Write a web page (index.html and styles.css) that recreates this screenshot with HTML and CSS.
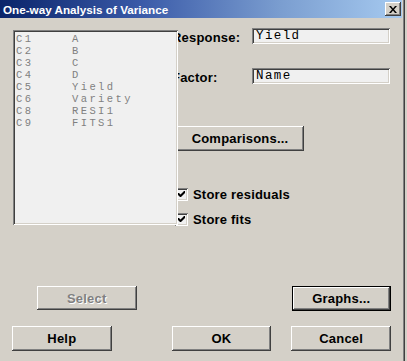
FILE: index.html
```html
<!DOCTYPE html>
<html>
<head>
<meta charset="utf-8">
<link rel="stylesheet" href="styles.css">
</head>
<body>
<div class="window">
  <div class="titlebar">
    <span class="title">One-way Analysis of Variance</span>
    <span class="close"><svg width="8" height="7" viewBox="0 0 8 7"><path d="M0 0h2l2 2.5L6 0h2L5 3.5 8 7H6L4 4.5 2 7H0l3-3.5z" fill="#000"/></svg></span>
  </div>
  <div class="body">
    <div class="top">
      <div class="listbox">
        <div class="item"><span class="c">C1</span><span>A</span></div>
        <div class="item"><span class="c">C2</span><span>B</span></div>
        <div class="item"><span class="c">C3</span><span>C</span></div>
        <div class="item"><span class="c">C4</span><span>D</span></div>
        <div class="item"><span class="c">C5</span><span>Yield</span></div>
        <div class="item"><span class="c">C6</span><span>Variety</span></div>
        <div class="item"><span class="c">C8</span><span>RESI1</span></div>
        <div class="item"><span class="c">C9</span><span>FITS1</span></div>
      </div>
      <div class="right">
        <div class="field">
          <span class="label">Response:</span>
          <div class="textbox">Yield</div>
        </div>
        <div class="field field2">
          <span class="label">Factor:</span>
          <div class="textbox">Name</div>
        </div>
        <button class="btn compare">Comparisons...</button>
        <div class="check first">
          <span class="box"><svg width="13" height="13" viewBox="0 0 13 13"><path d="M3 5v2l2 2h1l4-4V3h-1L5.5 6.5 4 5z" fill="#000"/></svg></span>
          <span class="label">Store residuals</span>
        </div>
        <div class="check">
          <span class="box"><svg width="13" height="13" viewBox="0 0 13 13"><path d="M3 5v2l2 2h1l4-4V3h-1L5.5 6.5 4 5z" fill="#000"/></svg></span>
          <span class="label">Store fits</span>
        </div>
      </div>
    </div>
    <div class="row row1">
      <button class="btn select" disabled>Select</button>
      <button class="btn default graphs">Graphs...</button>
    </div>
    <div class="row row2">
      <button class="btn help">Help</button>
      <button class="btn ok">OK</button>
      <button class="btn cancel">Cancel</button>
    </div>
  </div>
</div>
</body>
</html>
```
FILE: styles.css
```css
html, body {
  margin: 0;
  padding: 0;
  background: #d4d0c8;
}
.window {
  width: 405px;
  height: 361px;
  background: #d4d0c8;
  box-sizing: border-box;
  border-right: 1px solid #404040;
  box-shadow: inset -1px 0 #808080;
  overflow: hidden;
  font-family: "Liberation Sans", Arial, sans-serif;
}
.titlebar {
  height: 18px;
  margin-right: 2px;
  background: linear-gradient(to right, #0a246a 0%, #3a5aa8 35%, #7b9ed0 70%, #a6caf0 100%);
  display: flex;
  align-items: center;
  justify-content: space-between;
  padding-left: 3px;
}
.title {
  color: #fff;
  font-weight: bold;
  font-size: 11.7px;
  letter-spacing: 0;
}
.close {
  width: 16px;
  height: 14px;
  margin-right: 1px;
  box-sizing: border-box;
  background: #d4d0c8;
  box-shadow: inset -1px -1px #404040, inset 1px 1px #fff, inset -2px -2px #808080;
  display: flex;
  align-items: center;
  justify-content: center;
}
.body {
  padding: 10px 13px 0 13px;
}
.top {
  display: flex;
  height: 200px;
}
.listbox {
  position: relative;
  z-index: 1;
  flex: none;
  width: 165px;
  height: 195px;
  margin-top: 2px;
  box-sizing: border-box;
  background: #f0f0f0;
  box-shadow: inset 1px 1px #808080, inset -1px -1px #fff, inset 2px 2px #404040, inset -2px -2px #d4d0c8;
  padding: 3px 0 0 3px;
  font-family: "Liberation Mono", "Courier New", monospace;
  font-size: 10.5px;
  letter-spacing: 2.4px;
  color: #808080;
}
.item {
  display: flex;
  height: 12px;
  line-height: 12px;
}
.item .c {
  width: 56px;
}
.right {
  margin-left: -6px;
  display: flex;
  flex-direction: column;
  align-items: flex-start;
  width: 220px;
}
.label {
  font-weight: bold;
  font-size: 13px;
  color: #000;
  letter-spacing: 0.2px;
}
.field {
  display: flex;
  align-items: center;
  height: 16px;
}
.field .label {
  width: 80px;
  padding-top: 3px;
}
.field2 {
  margin-top: 24px;
}
.field2 .label {
  padding-top: 2px;
}
.textbox {
  width: 138px;
  height: 16px;
  box-sizing: border-box;
  background: #f0f0f0;
  box-shadow: inset 1px 1px #808080, inset -1px -1px #fff, inset 2px 2px #404040, inset -2px -2px #d4d0c8;
  padding: 2px 0 0 4px;
  font-family: "Liberation Mono", "Courier New", monospace;
  font-size: 12.5px;
  letter-spacing: 1.4px;
  line-height: 13px;
  color: #000;
}
.btn {
  display: block;
  margin: 0;
  padding: 0;
  border: 0;
  width: 100px;
  height: 25px;
  background: #d4d0c8;
  box-shadow: inset -1px -1px #404040, inset 1px 1px #fff, inset -2px -2px #808080;
  font-family: "Liberation Sans", Arial, sans-serif;
  font-weight: bold;
  font-size: 13px;
  letter-spacing: 0.2px;
  color: #000;
}
.compare {
  margin-top: 42px;
  margin-left: 4px;
  width: 128px;
}
.check {
  display: flex;
  align-items: center;
  height: 16px;
}
.check.first {
  margin-top: 35px;
}
.check + .check {
  margin-top: 9px;
}
.box {
  width: 13px;
  height: 13px;
  margin-left: 3px;
  margin-right: 5px;
  box-sizing: border-box;
  background: #f0f0f0;
  box-shadow: inset 1px 1px #808080, inset -1px -1px #fff, inset 2px 2px #404040, inset -2px -2px #d4d0c8;
  display: block;
}
.box svg {
  display: block;
}
.row {
  display: flex;
}
.row1 {
  margin-top: 58px;
}
.select {
  margin-left: 24px;
  height: 24px;
  color: #808080;
  text-shadow: 1px 1px #fff;
}
.graphs {
  margin-left: 155px;
}
.default {
  box-shadow: inset 1px 1px #000, inset -1px -1px #000, inset -2px -2px #404040, inset 2px 2px #fff, inset -3px -3px #808080;
}
.row2 {
  margin-top: 15px;
}
.help {
  margin-left: -1px;
}
.ok {
  margin-left: 60px;
}
.cancel {
  margin-left: 20px;
}
```
